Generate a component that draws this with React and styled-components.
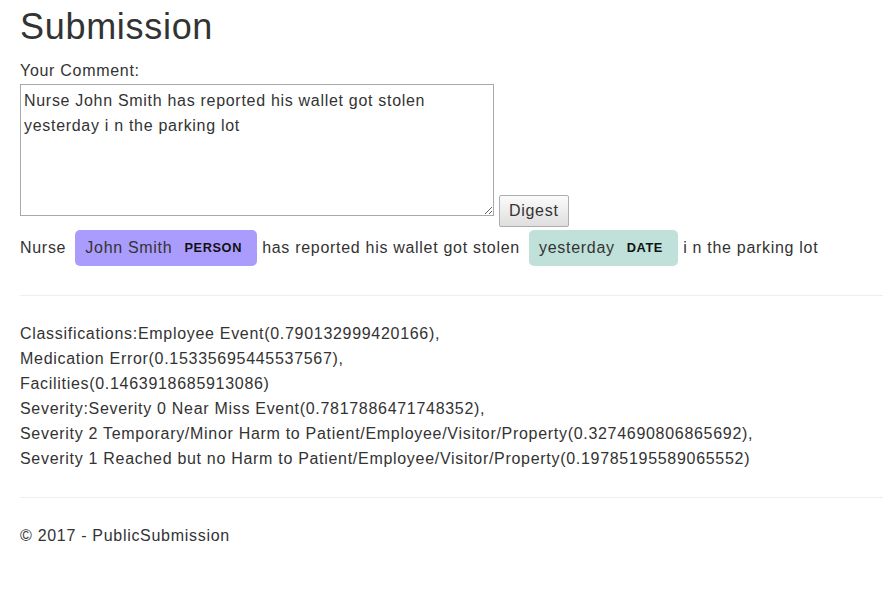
import styled, { createGlobalStyle } from 'styled-components';

const GlobalStyle = createGlobalStyle`
    body {
        margin: 0;
        font-family: "Liberation Sans", Arial, sans-serif;
        font-size: 16px;
        line-height: 25px;
        letter-spacing: 0.7px;
        color: #333;
        background: #fff;
    }
`;

const Page = styled.div`
    padding: 0 0 40px 20px;
`;

const Title = styled.h1`
    font-size: 36px;
    font-weight: 500;
    line-height: 40px;
    margin: 7px 0 11px;
`;

const Label = styled.label`
    display: block;
`;

const Form = styled.div`
    margin-top: 1px;
`;

const Comment = styled.textarea`
    box-sizing: border-box;
    width: 474px;
    height: 132px;
    padding: 3px 3px;
    border: 1px solid #a9a9a9;
    font: inherit;
    letter-spacing: 0.7px;
    line-height: 25px;
    color: #333;
    resize: both;
    vertical-align: baseline;
    margin: 0;
`;

const Button = styled.button`
    margin-left: 5px;
    height: 32px;
    padding: 0 9px;
    font: inherit;
    letter-spacing: 0.7px;
    color: #333;
    border: 1px solid #adadad;
    border-radius: 2px;
    background: linear-gradient(#fbfbfb, #dedede);
    cursor: pointer;
`;

const Entities = styled.div`
    line-height: 40px;
    margin: 1px 0 27px;
`;

const Mark = styled.mark`
    background: ${p => p.$bg};
    color: #333;
    padding: 9px 15px 10px 10px;
    margin: 0 0 0 4px;
    line-height: 1;
    border-radius: 5px;
`;

const Tag = styled.span`
    font-size: 12.8px;
    font-weight: bold;
    letter-spacing: 0.6px;
    text-transform: uppercase;
    color: #111;
    margin-left: 12px;
    vertical-align: middle;
`;

const Rule = styled.hr`
    border: 0;
    border-top: 1px solid #eee;
    margin: 0;
`;

const Results = styled.div`
    margin: 25px 0 26px;
`;

const Footer = styled.footer`
    margin-top: 25px;
`;

const results = [
    'Classifications:Employee Event(0.790132999420166),',
    'Medication Error(0.15335695445537567),',
    'Facilities(0.1463918685913086)',
    'Severity:Severity 0 Near Miss Event(0.7817886471748352),',
    'Severity 2 Temporary/Minor Harm to Patient/Employee/Visitor/Property(0.3274690806865692),',
    'Severity 1 Reached but no Harm to Patient/Employee/Visitor/Property(0.19785195589065552)',
];

const App = () => {
    return (
        <Page>
            <GlobalStyle />
            <Title>Submission</Title>
            <Label>Your Comment:</Label>
            <Form>
                <Comment
                    spellCheck={false}
                    defaultValue="Nurse John Smith has reported his wallet got stolen yesterday i n the parking lot"
                />
                <Button>Digest</Button>
            </Form>
            <Entities>
                Nurse <Mark $bg="#aa9cfc">John Smith<Tag>person</Tag></Mark> has reported his wallet got stolen{' '}
                <Mark $bg="#bfe1d9">yesterday<Tag>date</Tag></Mark> i n the parking lot
            </Entities>
            <Rule />
            <Results>
                {results.map((r) => <div key={r}>{r}</div>)}
            </Results>
            <Rule />
            <Footer>© 2017 - PublicSubmission</Footer>
        </Page>
    );
}

export default App;
